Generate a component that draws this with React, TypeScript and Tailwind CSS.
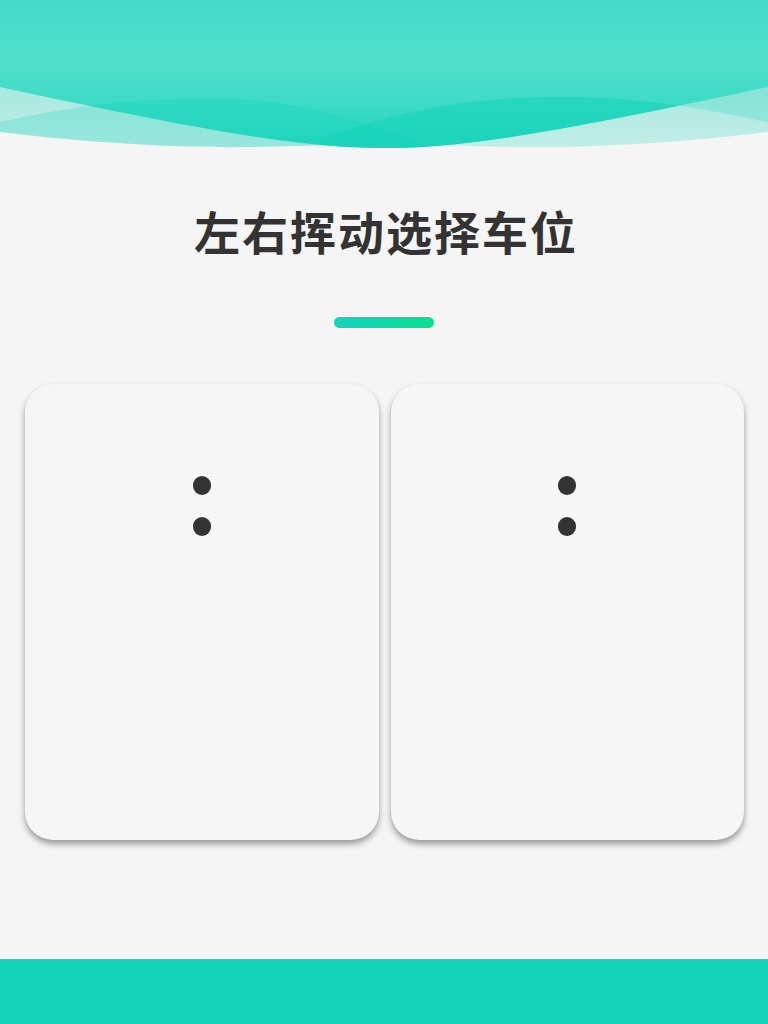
import React from "react";

const Wave = () => {
  return (
    <svg width="768" height="150" viewBox="0 0 768 150" className="block w-full h-[150px]">
      <defs>
        <linearGradient id="mainFill" x1="0" y1="0" x2="0" y2="150" gradientUnits="userSpaceOnUse">
          <stop offset="0" stopColor="#44dbc7" />
          <stop offset="0.4" stopColor="#50dfcb" />
          <stop offset="0.7" stopColor="#3cdbc5" />
          <stop offset="1" stopColor="#22d6bd" />
        </linearGradient>
        <linearGradient id="paleFill" x1="0" y1="80" x2="0" y2="150" gradientUnits="userSpaceOnUse">
          <stop offset="0" stopColor="#14d3b8" stopOpacity="0.36" />
          <stop offset="1" stopColor="#14d3b8" stopOpacity="0.22" />
        </linearGradient>
        <clipPath id="paleClip">
          <path d="M0,0 H768 V132 C678,143 588,148 518,147 C458,146 418,144 384,143 C350,144 310,146 250,147 C180,148 90,143 0,132 Z" />
        </clipPath>
        <clipPath id="mainClip">
          <path d="M0,0 H768 V87 C568,130 468,148 384,148 C300,148 200,130 0,87 Z" />
        </clipPath>
      </defs>

      {/* pale back wave */}
      <path
        d="M0,0 H768 V132 C678,143 588,148 518,147 C458,146 418,144 384,143 C350,144 310,146 250,147 C180,148 90,143 0,132 Z"
        fill="url(#paleFill)"
      />
      <g clipPath="url(#paleClip)">
        {/* left hump */}
        <path d="M0,122 C70,106 140,98 210,98 C300,98 360,120 440,152 L0,152 Z" fill="#14d3b8" fillOpacity="0.24" />
        {/* right band */}
        <path d="M320,0 V140 C400,110 470,97 560,97 C640,97 700,108 768,122 V0 Z" fill="#14d3b8" fillOpacity="0.22" />
      </g>

      {/* main wave */}
      <path d="M0,0 H768 V87 C568,130 468,148 384,148 C300,148 200,130 0,87 Z" fill="url(#mainFill)" />
      <g clipPath="url(#mainClip)">
        <path d="M0,122 C70,106 140,98 210,98 C300,98 360,120 440,152 L0,152 Z" fill="#14d3b8" fillOpacity="0.3" />
        <path d="M320,140 C400,110 470,97 560,97 C640,97 700,108 768,122 V152 H320 Z" fill="#14d3b8" fillOpacity="0.55" />
      </g>
    </svg>
  );
};

const SlotCard = () => {
  return (
    <div className="h-[456px] rounded-[28px] bg-[#f6f6f6] shadow-[0_4px_6px_rgba(0,0,0,0.38)] flex flex-col items-center pt-[92px]">
      <div className="w-[18px] h-[19px] rounded-full bg-[#333333]" />
      <div className="w-[18px] h-[19px] rounded-full bg-[#333333] mt-[22px]" />
    </div>
  );
};

export default function App() {
  return (
    <div className="min-h-screen w-full bg-[#f5f5f5] flex flex-col font-['Noto_Sans_CJK_SC',sans-serif]">
      <Wave />

      <h1 className="mt-[57px] pl-[4px] text-center text-[46px] leading-[46px] font-bold tracking-[2px] text-[#333333]">
        左右挥动选择车位
      </h1>

      <div className="mt-[64px] mx-auto w-[100px] h-[11px] rounded-full bg-gradient-to-r from-[#15d3be] to-[#0bde90]" />

      <div className="mt-[56px] grid grid-cols-2 gap-3 pl-[25px] pr-[24px]">
        <SlotCard />
        <SlotCard />
      </div>

      <div className="mt-auto h-[65px] bg-[#16d3bc]" />
    </div>
  );
}
